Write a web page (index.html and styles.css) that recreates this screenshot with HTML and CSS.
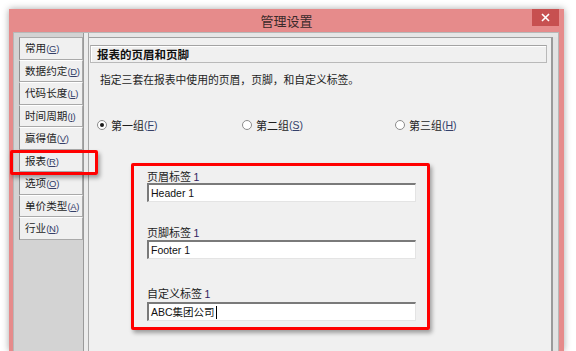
FILE: index.html
```html
<!DOCTYPE html>
<html lang="zh-CN">
<head>
<meta charset="utf-8">
<title>管理设置</title>
<link rel="stylesheet" href="styles.css">
</head>
<body>
<div class="window">
  <div class="titlebar">
    <span></span>
    <span class="title">管理设置</span>
    <span class="close"><svg width="9" height="9" viewBox="0 0 9 9"><path d="M1 1L8 8M8 1L1 8" stroke="#fff" stroke-width="1.6" fill="none"/></svg></span>
  </div>
  <div class="frame">
    <div class="tabs">
      <div class="tab">常用<span class="mn">(<u>G</u>)</span></div>
      <div class="tab">数据约定<span class="mn">(<u>D</u>)</span></div>
      <div class="tab">代码长度<span class="mn">(<u>L</u>)</span></div>
      <div class="tab">时间周期<span class="mn">(<u>I</u>)</span></div>
      <div class="tab">赢得值<span class="mn">(<u>V</u>)</span></div>
      <div class="tab">报表<span class="mn">(<u>R</u>)</span></div>
      <div class="tab">选项<span class="mn">(<u>O</u>)</span></div>
      <div class="tab">单价类型<span class="mn">(<u>A</u>)</span></div>
      <div class="tab">行业<span class="mn">(<u>N</u>)</span></div>
    </div>
    <div class="divider"></div>
    <div class="panel">
      <div class="section-head">报表的页眉和页脚</div>
      <p class="desc">指定三套在报表中使用的页眉，页脚，和自定义标签。</p>
      <div class="radios">
        <div class="radio r1"><span class="dot checked"></span>第一组<span class="mn">(<u>F</u>)</span></div>
        <div class="radio r2"><span class="dot"></span>第二组<span class="mn">(<u>S</u>)</span></div>
        <div class="radio r3"><span class="dot"></span>第三组<span class="mn">(<u>H</u>)</span></div>
      </div>
      <div class="redbox">
        <div class="field">
          <label class="lbl">页眉标签 <span class="num">1</span></label>
          <div class="input">Header 1</div>
        </div>
        <div class="field f2">
          <label class="lbl">页脚标签 <span class="num">1</span></label>
          <div class="input">Footer 1</div>
        </div>
        <div class="field f3">
          <label class="lbl">自定义标签 <span class="num">1</span></label>
          <div class="input">ABC集团公司<span class="caret"></span></div>
        </div>
      </div>
    </div>
    <div class="edge"></div>
  </div>
  <div class="mark"></div>
</div>
</body>
</html>
```

FILE: styles.css
```css
* { box-sizing: border-box; }
html, body { margin: 0; padding: 0; }
body {
  background: #ffffff;
  font-family: "Noto Sans CJK SC", "Liberation Sans", sans-serif;
  color: #1e1e1e;
  overflow: hidden;
  width: 576px;
  height: 351px;
}
.window {
  position: relative;
  margin: 9px 0 0 9px;
  width: 555px;
  height: 342px;
  background: #e68b8b;
  box-shadow: 0 0 7px rgba(0, 0, 0, 0.35);
}
.titlebar {
  height: 23px;
  display: grid;
  grid-template-columns: 1fr auto 1fr;
  align-items: start;
}
.title {
  font-size: 13px;
  line-height: 23px;
  color: #3a2a2a;
}
.close {
  justify-self: end;
  margin-right: 5px;
  width: 27px;
  height: 17px;
  background: #c75050;
  display: flex;
  align-items: center;
  justify-content: center;
}
.close svg { display: block; }
.frame {
  margin: 0 5px 0 4px;
  height: 319px;
  border: 1px solid #b8b8b8;
  border-bottom: none;
  background: #e6e6e6;
  display: flex;
}
.tabs {
  width: 69px;
  background: #d3d3d3;
  padding: 4px 0 0 5px;
}
.tab {
  height: 22.5px;
  background: #f0f0f0;
  border: 1px solid #a9a9a9;
  border-top-color: #ffffff;
  border-left-color: #8f8f8f;
  font-size: 10.6px;
  line-height: 19px;
  padding-left: 5px;
  white-space: nowrap;
  overflow: hidden;
}
.tab:first-child { border-top-color: #a9a9a9; }
.mn {
  font-family: "Liberation Sans", sans-serif;
  font-size: 10.5px;
  color: #34406a;
}
.tab .mn { font-size: 9.5px; letter-spacing: -0.3px; }
.mn u { text-decoration-thickness: 1px; text-underline-offset: 1px; }
.divider {
  width: 6px;
  border-left: 1px solid #9a9a9a;
  border-right: 1px solid #a8a8a8;
  background: #ececec;
}
.panel {
  width: 464px;
  margin-top: 4px;
  background: #f0f0f0;
  border-top: 1px solid #a0a0a0;
  border-right: 2px solid #9a9a9a;
}
.section-head {
  margin: 7px 0 0 1px;
  width: 457px;
  height: 18px;
  border: 1px solid #b9b9b9;
  border-top-color: #a3a3a3;
  box-shadow: inset 1px 1px 0 #ffffff;
  font-size: 11.5px;
  font-weight: bold;
  line-height: 16px;
  padding-left: 6px;
  color: #111;
}
.desc {
  margin: 8px 0 0 11px;
  font-size: 10.8px;
  line-height: 16px;
  color: #1e1e1e;
}
.radios {
  margin: 30px 0 0 8px;
  display: flex;
  height: 16px;
  font-size: 11px;
  line-height: 16px;
}
.radio { display: flex; align-items: center; white-space: nowrap; }
.r1 { width: 145px; }
.r2 { width: 153px; }
.dot {
  width: 10px;
  height: 10px;
  border-radius: 50%;
  border: 1px solid #8c8c8c;
  background: #fff;
  margin-right: 4px;
  display: flex;
  align-items: center;
  justify-content: center;
}
.dot.checked::after {
  content: "";
  width: 4px;
  height: 4px;
  border-radius: 50%;
  background: #1a1a1a;
}
.redbox {
  margin: 30px 0 0 42px;
  width: 299px;
  height: 167px;
  border: 3px solid #ff0000;
  border-radius: 2px;
  box-shadow: 2px 3px 4px rgba(0, 0, 0, 0.35);
  padding: 3px 0 0 13px;
}
.field { display: flex; flex-direction: column; }
.f2 { margin-top: 23px; }
.f3 { margin-top: 27px; }
.lbl {
  font-size: 11px;
  line-height: 14px;
  height: 14px;
  color: #1e1e1e;
}
.f2 .input { margin-top: 1px; }
.f3 .input { margin-top: 2px; }
.num {
  font-family: "Liberation Sans", sans-serif;
  font-size: 10.5px;
  color: #2e2060;
}
.input {
  width: 269px;
  height: 19px;
  background: #ffffff;
  border-top: 2px solid #7a7a7a;
  border-left: 2px solid #7a7a7a;
  border-right: 1px solid #e4e4e4;
  border-bottom: 1px solid #e4e4e4;
  font-family: "Liberation Sans", "Noto Sans CJK SC", sans-serif;
  font-size: 10.5px;
  line-height: 15px;
  padding-left: 2px;
  color: #111;
  display: flex;
  align-items: center;
}
.caret {
  display: inline-block;
  width: 1px;
  height: 13px;
  background: #000;
  margin-left: 1px;
}
.edge {
  width: 5px;
  background: #e3e3e3;
  margin-top: 4px;
}
.mark {
  position: absolute;
  left: 1px;
  top: 141px;
  width: 88px;
  height: 25px;
  border: 3px solid #ff0000;
  border-radius: 2px;
  box-shadow: 2px 3px 4px rgba(0, 0, 0, 0.35);
}
```
